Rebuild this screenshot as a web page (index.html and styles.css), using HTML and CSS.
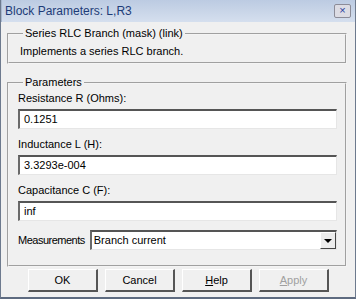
FILE: index.html
```html
<!DOCTYPE html>
<html lang="en">
<head>
    <meta charset="UTF-8">
    <title>Block Parameters: L,R3</title>
    <link rel="stylesheet" href="styles.css">
</head>
<body>
    <div class="window">
        <div class="titlebar">
            <span class="title">Block Parameters: L,R3</span>
            <span class="close">&#215;</span>
        </div>
        <div class="body">
            <fieldset class="group desc">
                <legend>Series RLC Branch (mask) (link)</legend>
                <p>Implements a series RLC branch.</p>
            </fieldset>

            <fieldset class="group params">
                <legend>Parameters</legend>
                <label>Resistance R (Ohms):</label>
                <div class="field">0.1251</div>
                <label>Inductance L (H):</label>
                <div class="field">3.3293e-004</div>
                <label>Capacitance C (F):</label>
                <div class="field">inf</div>
                <div class="row">
                    <label class="meas">Measurements</label>
                    <div class="select">
                        <span>Branch current</span>
                        <span class="drop"><span class="arrow"></span></span>
                    </div>
                </div>
            </fieldset>

            <div class="buttons">
                <button>OK</button>
                <button>Cancel</button>
                <button><u>H</u>elp</button>
                <button class="disabled"><u>A</u>pply</button>
            </div>
        </div>
    </div>
</body>
</html>
```

FILE: styles.css
```css
body {
    margin: 0;
    font-family: 'Liberation Sans', Arial, sans-serif;
    font-size: 11px;
    line-height: 13px;
    color: #000;
    background: #f0f0f0;
}
.window {
    width: 356px;
    height: 299px;
    box-sizing: border-box;
    border: 1px solid #6d7a8e;
    border-top: none;
    border-bottom: 2px solid #5e6b80;
    background: #f0f0f0;
    display: flex;
    flex-direction: column;
}
.titlebar {
    height: 22px;
    display: flex;
    align-items: center;
    justify-content: space-between;
    padding: 0 4px 0 3px;
    background: linear-gradient(#bccbe2, #d5dfee);
    border-left: 1px solid #a9b8cf;
}
.title {
    color: #1d3c78;
    font-size: 12px;
}
.close {
    width: 15px;
    height: 12px;
    line-height: 11px;
    text-align: center;
    font-size: 11px;
    color: #2b3fa0;
    background: #dcdce4;
    border: 1px solid #8c8c98;
    border-radius: 2px;
}
.body {
    flex: 1;
    padding: 0 8px 0 6px;
    display: flex;
    flex-direction: column;
}
.group {
    margin: 0;
    border: 2px groove #f4f4f4;
    padding: 0 8px 0 9px;
}
.group legend {
    padding: 0 2px;
    margin-left: 5px;
    line-height: 13px;
}
.desc {
    margin-top: 5px;
    padding-top: 5px;
    padding-bottom: 4px;
}
.desc p {
    margin: 0 0 0 2px;
}
.params {
    margin-top: 12px;
    padding-top: 3px;
    padding-bottom: 15px;
}
.params label {
    display: block;
}
.field, .select {
    height: 20px;
    box-sizing: border-box;
    background: #fff;
    border-top: 2px solid #555;
    border-left: 2px solid #6a6a6a;
    border-right: 1px solid #e6e6e6;
    border-bottom: 1px solid #e6e6e6;
    padding-left: 4px;
    line-height: 17px;
}
.field {
    margin: 4px 0 9px;
}
.row {
    display: flex;
    align-items: center;
    gap: 5px;
}
.params .meas {
    letter-spacing: -0.5px;
    white-space: nowrap;
}
.select {
    flex: 1;
    display: flex;
    justify-content: space-between;
    padding-left: 2px;
}
.drop {
    width: 16px;
    height: 17px;
    box-sizing: border-box;
    background: #ececec;
    border-top: 1px solid #fff;
    border-left: 1px solid #fff;
    border-right: 1px solid #444;
    border-bottom: 1px solid #444;
    display: flex;
    align-items: center;
    justify-content: center;
}
.arrow {
    width: 0;
    height: 0;
    border-left: 4px solid transparent;
    border-right: 4px solid transparent;
    border-top: 4px solid #000;
}
.buttons {
    display: flex;
    gap: 7px;
    padding: 2px 0 0 21px;
}
.buttons button {
    width: 70px;
    height: 23px;
    font-family: inherit;
    font-size: 11px;
    background: #f0f0f0;
    border-top: 1px solid #fff;
    border-left: 1px solid #fff;
    border-right: 2px solid #555;
    border-bottom: 2px solid #555;
    padding: 0;
    color: #000;
}
.buttons .disabled {
    color: #a0a0a0;
}
```
